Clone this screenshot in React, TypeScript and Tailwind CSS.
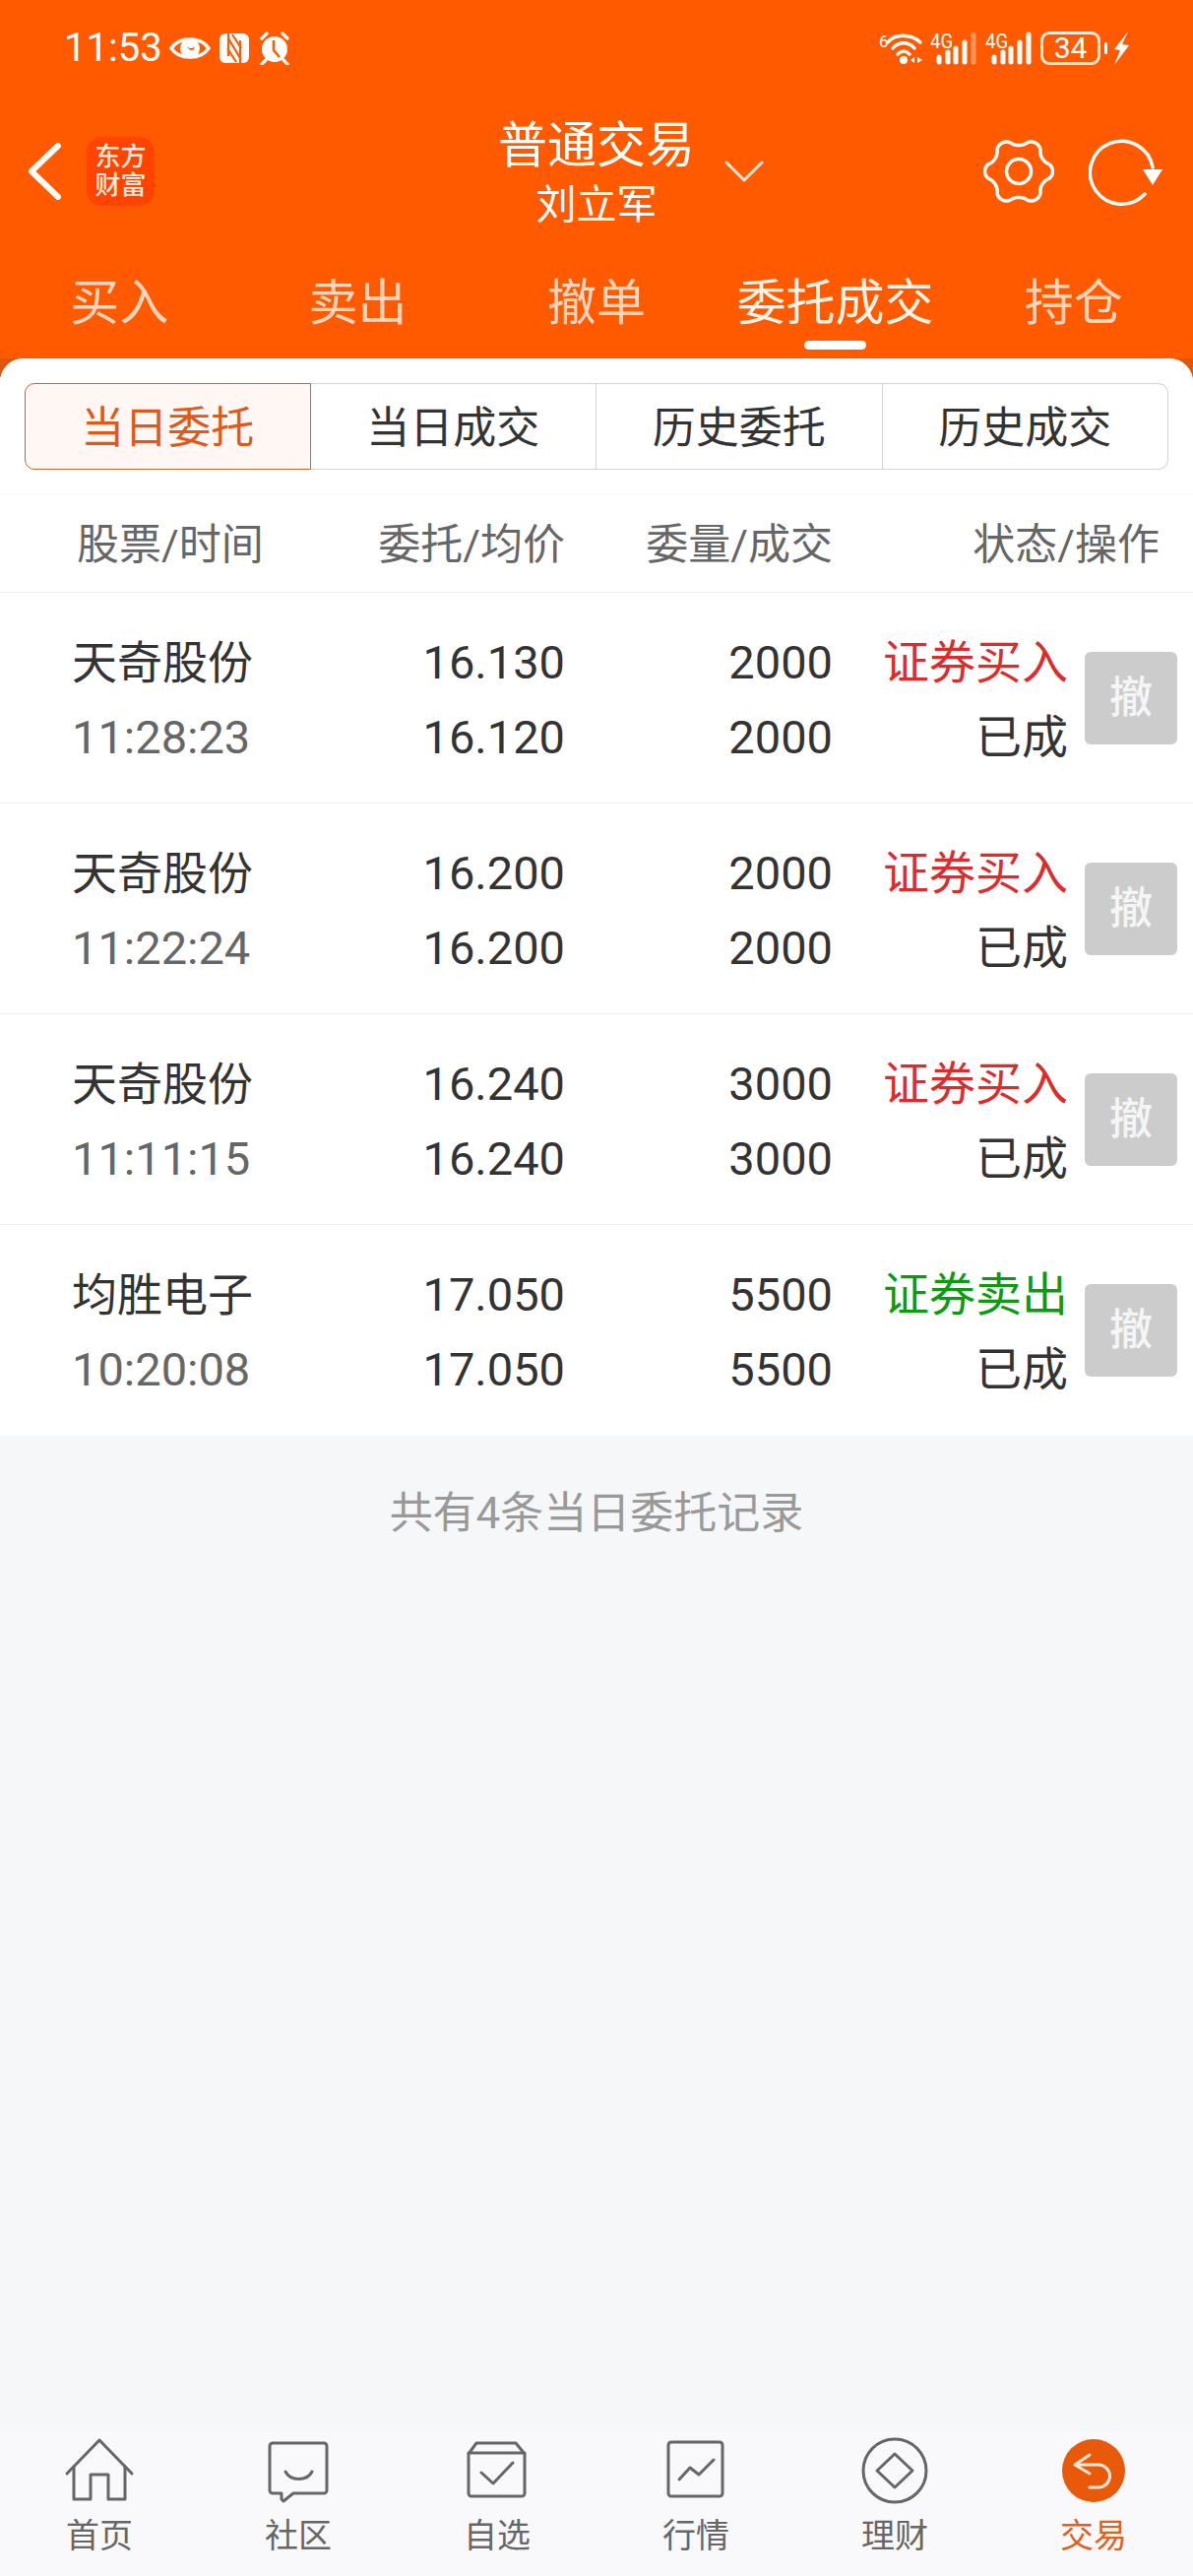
const tabs = ["买入", "卖出", "撤单", "委托成交", "持仓"];
const segments = ["当日委托", "当日成交", "历史委托", "历史成交"];

const rows = [
  { name: "天奇股份", time: "11:28:23", price: "16.130", avg: "16.120", qty: "2000", done: "2000", side: "证券买入", buy: true },
  { name: "天奇股份", time: "11:22:24", price: "16.200", avg: "16.200", qty: "2000", done: "2000", side: "证券买入", buy: true },
  { name: "天奇股份", time: "11:11:15", price: "16.240", avg: "16.240", qty: "3000", done: "3000", side: "证券买入", buy: true },
  { name: "均胜电子", time: "10:20:08", price: "17.050", avg: "17.050", qty: "5500", done: "5500", side: "证券卖出", buy: false },
];

// cog outline: six flat-ish lobes
const gearPath = () => {
  const points: string[] = [];
  for (let i = 0; i < 144; i++) {
    const t = (i / 144) * Math.PI * 2;
    const c = Math.cos(6 * t);
    const r = 31 + 3.5 * Math.sign(c) * Math.pow(Math.abs(c), 0.7);
    points.push(`${(35 + r * Math.cos(t)).toFixed(2)} ${(34 + r * 0.96 * Math.sin(t)).toFixed(2)}`);
  }
  return `M${points.join("L")}Z`;
};

const Signal = ({ faded }: { faded?: boolean }) => (
  <svg width="48" height="38" viewBox="0 0 48 38">
    <text x="0" y="19" fontSize="20" fill="#fff" textLength="23" lengthAdjust="spacingAndGlyphs">
      4G
    </text>
    <g stroke="#fff" strokeWidth="5" strokeLinecap="round">
      <path d="M9 28V33" />
      <path d="M18 23V33" />
      <path d="M26 19V33" />
      <path d="M35 13V33" />
      <path d="M44 5V33" strokeOpacity={faded ? 0.35 : 1} />
    </g>
  </svg>
);

const StatusBar = () => (
  <div className="flex h-[120px] items-start justify-between pl-[65px] pr-[65px] pt-[31px] text-white">
    <div className="flex h-[36px] items-center">
      <span className="text-[40px] leading-[36px]">11:53</span>
      {/* eye */}
      <svg className="ml-[7px]" width="42" height="30" viewBox="0 0 42 30">
        <path d="M2 15C10 3 32 3 40 15C32 27 10 27 2 15Z" fill="none" stroke="#fff" strokeWidth="3.5" />
        <circle cx="21" cy="15" r="10" fill="#fff" />
        <path d="M17 10C18 15 21 16 26 14C25 18 19 19 17 10Z" fill="#ff5a00" />
      </svg>
      {/* nfc */}
      <svg className="ml-[9px]" width="30" height="32" viewBox="0 0 30 32">
        <rect x="0" y="1" width="30" height="30" rx="6" fill="#fff" />
        <path d="M9 1V24M21 8V31M9 6L21 26M13 2L22 16M8 16L17 30" stroke="#ff5a00" strokeWidth="2.2" fill="none" />
      </svg>
      {/* alarm */}
      <svg className="ml-[10px]" width="32" height="34" viewBox="0 0 32 34">
        <circle cx="16" cy="18" r="13" fill="#fff" />
        <path d="M3 7L8 2M29 7L24 2M7 29L3 33M25 29L29 33" stroke="#fff" strokeWidth="3.2" strokeLinecap="round" />
        <path d="M15 9V19L21 26" stroke="#ff5a00" strokeWidth="2.6" fill="none" />
      </svg>
    </div>
    <div className="flex h-[36px] items-center">
      {/* wifi */}
      <svg width="46" height="34" viewBox="0 0 46 34">
        <text x="0" y="16" fontSize="17" fill="#fff">
          6
        </text>
        <g fill="none" stroke="#fff" strokeWidth="3.4" strokeLinecap="round">
          <path d="M9 11C16 2 32 2 42 11" />
          <path d="M14 17C20 10 30 10 36 17" />
          <path d="M19 23C23 19 27 19 31 23" />
        </g>
        <circle cx="25" cy="29" r="4" fill="#fff" />
        <path d="M36 26V32L32 29ZM39 26V32L44 29Z" fill="#fff" />
      </svg>
      <div className="ml-[6px]">
        <Signal faded />
      </div>
      <div className="ml-[8px]">
        <Signal />
      </div>
      <div className="ml-[8px] flex h-[34px] w-[61px] items-center justify-center rounded-[9px] border-[3px] border-[#ffe9dc] text-[30px] leading-none">
        34
      </div>
      <div className="ml-[4px] h-[12px] w-[3px] rounded-full bg-white" />
      <svg className="ml-[6px]" width="16" height="36" viewBox="0 0 16 36">
        <path d="M15 1L1 19L7 20L1 35L16 15L9 14Z" fill="#fff" />
      </svg>
    </div>
  </div>
);

const NavBar = () => (
  <div className="grid h-[120px] grid-cols-[1fr_202px_1fr] text-white">
    <div className="flex items-start pl-[28px] pt-[19px]">
      <svg className="mt-[6px]" width="36" height="58" viewBox="0 0 36 58">
        <path d="M31 3L4 29L31 55" fill="none" stroke="#fff" strokeWidth="6" strokeLinecap="round" strokeLinejoin="round" />
      </svg>
      <div className="ml-[24px] flex h-[70px] w-[69px] flex-col items-center justify-center rounded-[15px] bg-[#ff4400] text-[26px] font-medium leading-[29px] text-[#ffe9dc]">
        <span>东方</span>
        <span>财富</span>
      </div>
    </div>
    <div className="flex flex-col items-center pt-[1px]">
      <span className="text-[50px] leading-[54px]">普通交易</span>
      <span className="text-[41px] leading-[66px]">刘立军</span>
    </div>
    <div className="flex items-start pl-[29px] pr-[30px] pt-[20px]">
      <svg className="mt-[23px]" width="40" height="22" viewBox="0 0 40 22">
        <path d="M2 2L20 20L38 2" fill="none" stroke="#ffe9dc" strokeWidth="3" strokeLinecap="round" strokeLinejoin="round" />
      </svg>
      <svg className="ml-auto" width="72" height="68" viewBox="0 0 70 68">
        <path d={gearPath()} fill="none" stroke="#fff" strokeWidth="3.5" strokeLinejoin="round" />
        <circle cx="35" cy="34" r="12.5" fill="none" stroke="#fff" strokeWidth="3.5" />
      </svg>
      <svg className="ml-[35px]" width="76" height="70" viewBox="0 0 76 70">
        <path d="M57 57A32 32 0 1 1 65 30" fill="none" stroke="#fff" strokeWidth="3.5" strokeLinecap="round" />
        <path d="M55 32H75L65 48Z" fill="#fff" />
      </svg>
    </div>
  </div>
);

const TopTabs = () => (
  <div className="grid h-[124px] grid-cols-5 pt-[33px]">
    {tabs.map((tab, i) => (
      <div key={tab} className="flex flex-col items-center">
        <span className={i === 3 ? "text-[50px] leading-[70px] text-[#fff3ea]" : "text-[50px] leading-[70px] text-[#ffd6bd]"}>{tab}</span>
        {i === 3 && <div className="mt-[3px] h-[9px] w-[63px] rounded-full bg-white" />}
      </div>
    ))}
  </div>
);

const Segments = () => (
  <div className="mx-[25px] mt-[25px] grid h-[88px] grid-cols-4">
    {segments.map((seg, i) => (
      <div
        key={seg}
        className={
          i === 0
            ? "flex items-center justify-center rounded-l-[10px] border border-[#c8662f] bg-[#fff7f3] pt-[3px] text-[44px] text-[#e0591a]"
            : i === 3
              ? "flex items-center justify-center rounded-r-[10px] border border-l-0 border-[#d4d4d4] pt-[3px] text-[44px] text-[#333]"
              : "flex items-center justify-center border border-l-0 border-[#d4d4d4] pt-[3px] text-[44px] text-[#333]"
        }
      >
        {seg}
      </div>
    ))}
  </div>
);

const TableHead = () => (
  <div className="mt-[24px] flex h-[101px] items-center border-t border-b border-t-[#f8f8f8] border-b-[#f0f0f0] pr-[34px] pt-[3px] text-[43px] text-[#666]">
    <div className="w-[300px] pl-[78px]">股票/时间</div>
    <div className="w-[274px] text-right">委托/均价</div>
    <div className="w-[272px] text-right">委量/成交</div>
    <div className="flex-1 text-right">状态/操作</div>
  </div>
);

const Row = ({ row, last }: { row: (typeof rows)[number]; last: boolean }) => (
  <div className={last ? "flex h-[214px] items-center bg-white text-[47px] leading-[76px] text-[#333]" : "flex h-[214px] items-center border-b border-[#f0f0f0] bg-white text-[47px] leading-[76px] text-[#333]"}>
    <div className="w-[300px] pl-[73px] pt-[4px]">
      <div className="text-[46px]">{row.name}</div>
      <div className="text-[#666]">{row.time}</div>
    </div>
    <div className="w-[274px] pt-[4px] text-right">
      <div>{row.price}</div>
      <div>{row.avg}</div>
    </div>
    <div className="w-[272px] pt-[4px] text-right">
      <div>{row.qty}</div>
      <div>{row.done}</div>
    </div>
    <div className="w-[239px] pt-[4px] text-right">
      <div className={row.buy ? "text-[#dd2c2c]" : "text-[#0e9a0e]"}>{row.side}</div>
      <div>已成</div>
    </div>
    <div className="ml-[17px] flex h-[94px] w-[94px] items-center justify-center rounded-[6px] bg-[#cccccc] text-[44px] font-medium text-[#f5f5f5]">撤</div>
  </div>
);

const navItems = [
  {
    label: "首页",
    icon: (
      <>
        <path d="M3 37L36 3L69 37" />
        <path d="M10 30V63H27V38H45V63H62V30" />
      </>
    ),
  },
  {
    label: "社区",
    icon: (
      <>
        <path d="M10 6H62A3 3 0 0 1 65 9V54A3 3 0 0 1 62 57H31L21 65L19 63V57H10A3 3 0 0 1 7 54V9A3 3 0 0 1 10 6Z" />
        <path d="M23 35C28 45 45 45 50 35" />
      </>
    ),
  },
  {
    label: "自选",
    icon: (
      <>
        <path d="M15 6H55L64 17V57A3 3 0 0 1 61 60H10A3 3 0 0 1 7 57V17Z" />
        <path d="M7 16H64" />
        <path d="M20 36L32 47L52 26" />
      </>
    ),
  },
  {
    label: "行情",
    icon: (
      <>
        <rect x="8" y="5" width="55" height="55" rx="3" />
        <path d="M19 43L30 31L39 38L54 23" />
      </>
    ),
  },
  {
    label: "理财",
    icon: (
      <>
        <circle cx="36" cy="34" r="32" />
        <path d="M36 17L54 34L36 51L18 34Z" />
      </>
    ),
  },
];

const BottomNav = () => (
  <div className="grid h-[146px] grid-cols-6 bg-[#f9f9fb] pt-[5px]">
    {navItems.map((item) => (
      <div key={item.label} className="flex flex-col items-center">
        <svg width="72" height="68" viewBox="0 0 72 68" fill="none" stroke="#666" strokeWidth="3" strokeLinejoin="round" strokeLinecap="round">
          {item.icon}
        </svg>
        <span className="mt-[12px] text-[34px] leading-[40px] text-[#666]">{item.label}</span>
      </div>
    ))}
    <div className="flex flex-col items-center">
      <svg width="72" height="68" viewBox="0 0 72 68" fill="none">
        <circle cx="36" cy="34" r="32" fill="#e8590a" />
        <path d="M17 28H41A11.5 11.5 0 0 1 41 51H32M32 18L17 28L32 37" stroke="#ffe8d8" strokeWidth="3" strokeLinecap="round" strokeLinejoin="round" />
      </svg>
      <span className="mt-[12px] text-[34px] leading-[40px] text-[#e0601e]">交易</span>
    </div>
  </div>
);

export default function App() {
  return (
    <div className="flex h-[2616px] w-[1212px] flex-col overflow-hidden bg-[#ff5a00] font-['Roboto','Noto_Sans_CJK_SC',sans-serif]">
      <StatusBar />
      <NavBar />
      <TopTabs />
      <div className="flex flex-1 flex-col bg-[#e0560f]">
        <div className="flex flex-1 flex-col overflow-hidden rounded-t-[24px] bg-[#f6f7f9]">
          <div className="bg-white">
            <Segments />
            <TableHead />
          </div>
          {rows.map((row, i) => (
            <Row key={row.time} row={row} last={i === rows.length - 1} />
          ))}
          <div className="flex h-[158px] items-center justify-center text-[44px] text-[#999]">共有4条当日委托记录</div>
          <div className="flex-1" />
          <BottomNav />
        </div>
      </div>
    </div>
  );
}
